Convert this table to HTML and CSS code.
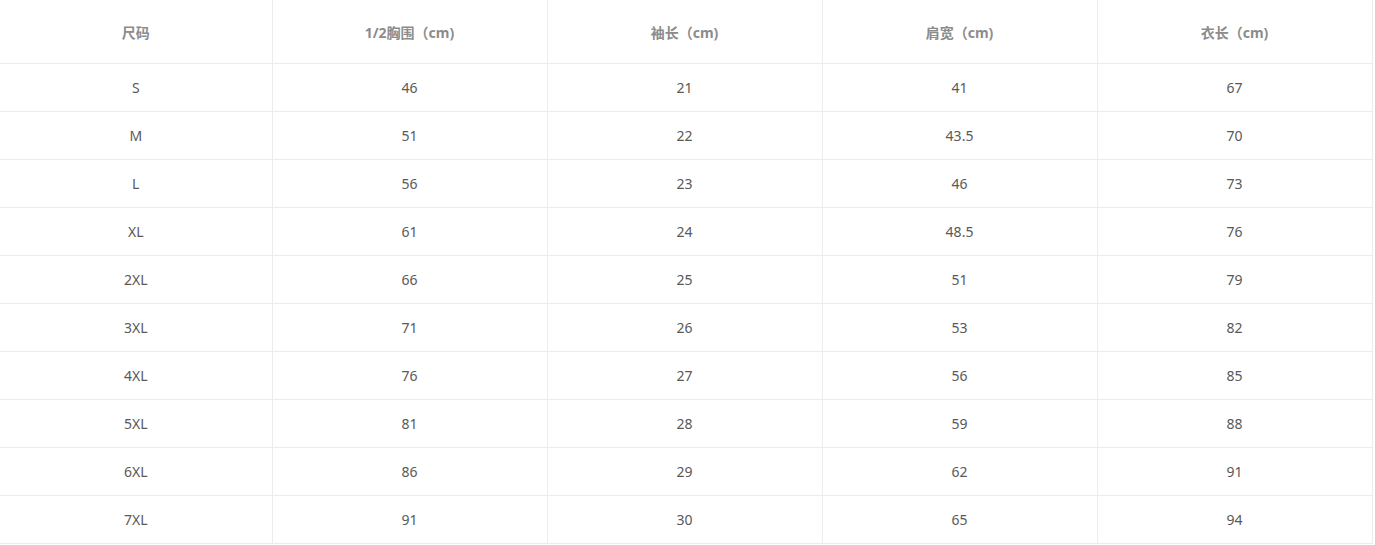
FILE: index.html
```html
<!DOCTYPE html>
<html lang="zh-CN">
<head>
<meta charset="utf-8">
<title>尺码表</title>
<link rel="stylesheet" href="styles.css">
</head>
<body>
<table class="size-table">
  <colgroup>
    <col class="col-first">
    <col class="col">
    <col class="col">
    <col class="col">
    <col class="col">
  </colgroup>
  <thead>
    <tr class="head-row">
      <th>尺码</th><th>1/2胸围（cm)</th><th>袖长（cm)</th><th>肩宽（cm)</th><th>衣长（cm)</th>
    </tr>
  </thead>
  <tbody>
    <tr><td>S</td><td>46</td><td>21</td><td>41</td><td>67</td></tr>
    <tr><td>M</td><td>51</td><td>22</td><td>43.5</td><td>70</td></tr>
    <tr><td>L</td><td>56</td><td>23</td><td>46</td><td>73</td></tr>
    <tr><td>XL</td><td>61</td><td>24</td><td>48.5</td><td>76</td></tr>
    <tr><td>2XL</td><td>66</td><td>25</td><td>51</td><td>79</td></tr>
    <tr><td>3XL</td><td>71</td><td>26</td><td>53</td><td>82</td></tr>
    <tr><td>4XL</td><td>76</td><td>27</td><td>56</td><td>85</td></tr>
    <tr><td>5XL</td><td>81</td><td>28</td><td>59</td><td>88</td></tr>
    <tr><td>6XL</td><td>86</td><td>29</td><td>62</td><td>91</td></tr>
    <tr><td>7XL</td><td>91</td><td>30</td><td>65</td><td>94</td></tr>
  </tbody>
</table>
</body>
</html>
```
FILE: styles.css
```css
html, body {
  margin: 0;
  padding: 0;
  background: #ffffff;
}
.size-table {
  border-collapse: collapse;
  table-layout: fixed;
  width: 1372px;
  font-family: "Noto Sans", "Noto Sans CJK SC", sans-serif;
  font-size: 14px;
}
.col-first { width: 272px; }
.col { width: 275px; }
.size-table th,
.size-table td {
  padding: 0;
  text-align: center;
  vertical-align: middle;
  border-right: 1px solid #ececec;
  border-bottom: 1px solid #ececec;
}
.size-table th {
  height: 63px;
  font-weight: 700;
  color: #8c8c8c;
}
.size-table td {
  height: 47px;
  color: #595959;
  font-weight: 400;
}
```
